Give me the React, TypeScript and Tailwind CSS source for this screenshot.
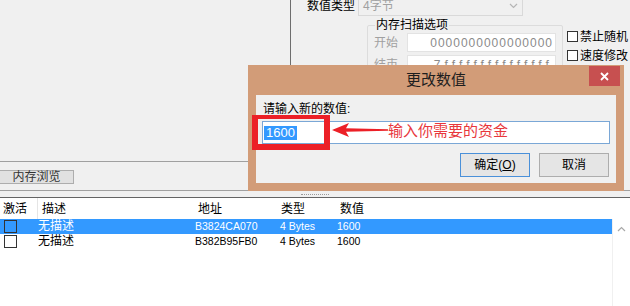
import React from "react";

const font = { fontFamily: '"Liberation Sans", "Noto Sans CJK SC", sans-serif' };

function Check({ label }: { label: string }) {
  return (
    <div className="flex items-center h-[19px] whitespace-nowrap">
      <span className="w-[11px] h-[11px] border border-[#333] bg-white shrink-0" />
      <span className="ml-[2px] text-[12px] text-black">{label}</span>
    </div>
  );
}

function ListRow({ selected, addr }: { selected?: boolean; addr: string }) {
  return (
    <div
      className={
        "grid grid-cols-[38px_157px_84px_58px_1fr] h-[15px] items-center " +
        (selected ? "bg-[#3399ff] text-white" : "text-black")
      }
    >
      <div className="pl-[4px]">
        <span
          className={
            "block w-[13px] h-[13px] border border-[#333] " +
            (selected ? "bg-[#3399ff]" : "bg-white")
          }
        />
      </div>
      <div className="text-[12px] leading-[15px]">无描述</div>
      <div className="text-[10.5px] leading-[15px]">{addr}</div>
      <div className="pl-[1px] text-[10.5px] leading-[15px]">4 Bytes</div>
      <div className="text-[10.5px] leading-[15px]">1600</div>
    </div>
  );
}

export default function App() {
  return (
    <div
      style={font}
      className="relative w-[630px] h-[306px] overflow-hidden bg-[#f0f0f0] flex flex-col text-[12px] text-black"
    >
      {/* upper part */}
      <div className="flex h-[162px] shrink-0">
        <div className="w-[291px] shrink-0 border-r border-r-[#6e6e6e] border-b border-b-[#a0a0a0]" />
        <div className="flex-1 flex flex-col">
          <div className="flex items-center pl-[16px] mt-[-4px] h-[20px]">
            <span className="text-[12px]">数值类型</span>
            <div className="ml-[3px] w-[165px] h-[20px] border border-[#d9d9d9] bg-[#f0f0f0] flex items-center justify-between pl-[4px] pr-[4px] text-[#a0a0a0]">
              <span>4字节</span>
              <svg width="9" height="6" viewBox="0 0 9 6">
                <path d="M1 1 L4.5 4.5 L8 1" fill="none" stroke="#b5b5b5" strokeWidth="1.2" />
              </svg>
            </div>
          </div>
          <div className="flex mt-[1px] pl-[76px]">
            <fieldset className="w-[196px] border border-[#dcdcdc] rounded-[2px] pl-[6px] pr-[5px] pb-[4px]">
              <legend className="px-[1px] ml-[1px] text-[12px] leading-[16px]">内存扫描选项</legend>
              <div className="flex items-center h-[19px]">
                <span className="w-[24px] text-[#a0a0a0]">开始</span>
                <div className="ml-[9px] w-[149px] h-[19px] bg-white border border-[#e3e3e3] flex items-center justify-end pr-[2px] text-[12px] tracking-[1px] text-[#8a8a8a]">
                  0000000000000000
                </div>
              </div>
              <div className="flex items-center h-[19px] mt-[3px]">
                <span className="w-[24px] text-[#a0a0a0]">结束</span>
                <div className="ml-[9px] w-[149px] h-[19px] bg-white border border-[#e3e3e3] flex items-center justify-end pr-[2px] text-[12px] tracking-[4.1px] text-[#8a8a8a]">
                  7fffffffffffffff
                </div>
              </div>
            </fieldset>
            <div className="ml-[4px] mt-[10px] flex flex-col">
              <Check label="禁止随机" />
              <Check label="速度修改" />
            </div>
          </div>
        </div>
      </div>

      {/* button row */}
      <div className="h-[29px] shrink-0 border-b border-[#a0a0a0] pt-[8px]">
        <div className="ml-[-1px] w-[75px] h-[14px] border border-[#adadad] bg-[#e1e1e1] flex items-center justify-center text-[12px] leading-[12px] text-[#333]">
          内存浏览
        </div>
      </div>

      {/* splitter */}
      <div className="h-[6px] shrink-0 flex items-center justify-center">
        <div className="w-[28px] h-[1px] border-t border-dotted border-[#9a9a9a]" />
      </div>

      {/* address list */}
      <div className="flex-1 flex flex-col bg-white border-t border-[#646464]">
        <div className="grid grid-cols-[38px_157px_84px_58px_1fr] h-[21px] items-center text-[12px] shrink-0">
          <div className="pl-[3px] h-full flex items-center border-r border-[#e5e5e5]">激活</div>
          <div className="pl-[4px]">描述</div>
          <div className="pl-[3px]">地址</div>
          <div className="pl-[2px]">类型</div>
          <div className="pl-[3px]">数值</div>
        </div>
        <div className="flex flex-1">
          <div className="w-[612px] flex flex-col">
            <ListRow selected addr="B3824CA070" />
            <ListRow addr="B382B95FB0" />
          </div>
          <div className="flex-1 border-l border-[#f0f0f0] flex justify-center pt-[7px]">
            <svg width="9" height="6" viewBox="0 0 9 6">
              <path d="M1 5 L4.5 1.5 L8 5" fill="none" stroke="#a8a8a8" strokeWidth="1.2" />
            </svg>
          </div>
        </div>
      </div>

      {/* dialog */}
      <div className="absolute left-[248px] top-[65px] w-[376px] h-[126px] bg-[#d29c78] flex flex-col">
        <div className="relative h-[30px] flex items-center justify-center text-[15px] text-[#1e1e1e]">
          更改数值
          <div className="absolute right-[4px] top-[1px] w-[31px] h-[20px] bg-[#c75050] flex items-center justify-center">
            <svg width="9" height="9" viewBox="0 0 9 9">
              <path d="M1 1 L8 8 M8 1 L1 8" stroke="white" strokeWidth="1.8" />
            </svg>
          </div>
        </div>
        <div className="mx-[8px] h-[88px] bg-[#f0f0f0] px-[6px] pt-[6px] flex flex-col">
          <div className="pl-[1px] leading-[16px] text-[12px]">请输入新的数值:</div>
          <div className="mt-[4px] h-[23px] bg-white border border-[#7aa7d6] flex items-center pl-[1px]">
            <span className="bg-[#3399ff] text-white text-[13px] leading-[14px] px-[2px]">1600</span>
          </div>
          <div className="mt-[9px] flex justify-end gap-[9px] pr-[1px]">
            <div className="w-[70px] h-[24px] border border-[#4a90d9] bg-[#e5e5e5] flex items-center justify-center text-[12px]">
              确定(<span className="underline">O</span>)
            </div>
            <div className="w-[70px] h-[24px] border border-[#adadad] bg-[#e5e5e5] flex items-center justify-center text-[12px]">
              取消
            </div>
          </div>
        </div>
      </div>

      {/* annotations */}
      <div className="absolute left-[252px] top-[115px] w-[78px] h-[35px] border-[6px] border-t-[4px] border-[#ec2027]" />
      <svg className="absolute left-[330px] top-[121px]" width="60" height="18" viewBox="0 0 60 18">
        <polygon points="2,9 19,2 16,7.3 58,8.3 58,9.7 16,10.7 19,16" fill="#ec2027" />
      </svg>
      <div className="absolute left-[388px] top-[121px] text-[15px] leading-[20px] text-[#e8373c]">
        输入你需要的资金
      </div>
    </div>
  );
}
